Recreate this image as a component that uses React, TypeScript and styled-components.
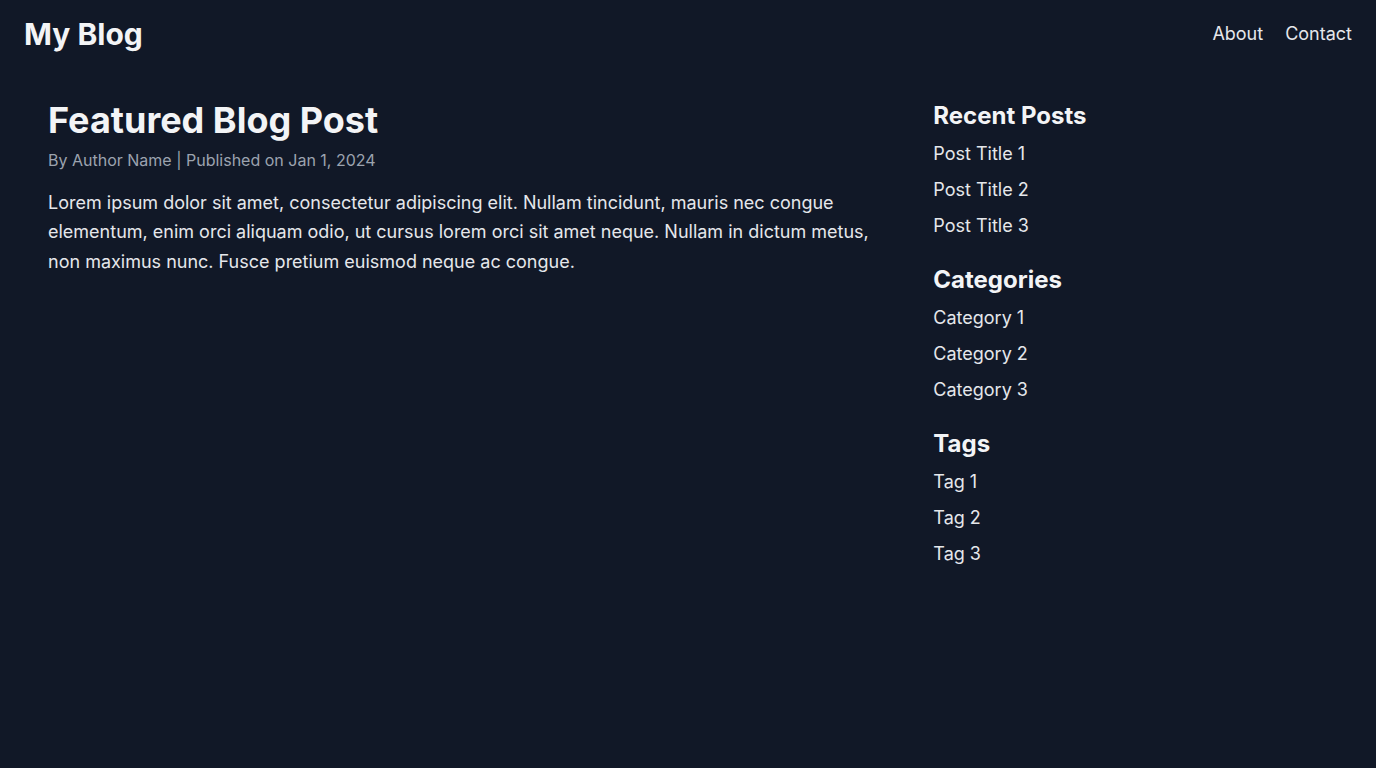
import { createGlobalStyle, styled } from "styled-components";

const GlobalStyle = createGlobalStyle`
  * {
    box-sizing: border-box;
  }
  body {
    margin: 0;
    background: #111827;
    color: #f3f4f6;
    font-family: Inter, "Noto Sans", sans-serif;
  }
  #root {
    min-height: 100vh;
  }
`;

const Page = styled.div`
  min-height: 100vh;
  background: #111827;
`;

const Header = styled.header`
  display: flex;
  align-items: center;
  justify-content: space-between;
  padding: 16px 24px;
`;

const Logo = styled.h1`
  margin: 0;
  font-size: 30px;
  line-height: 36px;
  font-weight: 700;
  color: #f3f4f6;
`;

const Nav = styled.nav`
  display: flex;
  gap: 22px;
`;

const NavLink = styled.a`
  font-size: 18px;
  line-height: 28px;
  color: #e5e7eb;
  text-decoration: none;
`;

const Main = styled.main`
  display: grid;
  grid-template-columns: repeat(3, minmax(0, 1fr));
  gap: 48px;
  padding: 32px 48px;
`;

const Article = styled.article`
  grid-column: span 2;
`;

const Title = styled.h2`
  margin: 0 0 8px;
  font-size: 36px;
  line-height: 40px;
  font-weight: 700;
  color: #f3f4f6;
`;

const Meta = styled.p`
  margin: 0 0 16px;
  font-size: 16px;
  line-height: 24px;
  color: #9ca3af;
`;

const Body = styled.p`
  margin: 0;
  font-size: 18px;
  line-height: 29.25px;
  color: #e5e7eb;
`;

const Sidebar = styled.aside`
  display: flex;
  flex-direction: column;
  gap: 24px;
`;

const SectionTitle = styled.h3`
  margin: 0 0 8px;
  font-size: 24px;
  line-height: 32px;
  font-weight: 700;
  color: #f3f4f6;
`;

const List = styled.ul`
  list-style: none;
  margin: 0;
  padding: 0;
  display: flex;
  flex-direction: column;
  gap: 8px;
`;

const ListLink = styled.a`
  display: block;
  font-size: 18px;
  line-height: 28px;
  color: #e5e7eb;
  text-decoration: none;
`;

const sections = [
  { title: "Recent Posts", items: ["Post Title 1", "Post Title 2", "Post Title 3"] },
  { title: "Categories", items: ["Category 1", "Category 2", "Category 3"] },
  { title: "Tags", items: ["Tag 1", "Tag 2", "Tag 3"] },
];

export default function App() {
  return (
    <Page>
      <GlobalStyle />
      <Header>
        <Logo>My Blog</Logo>
        <Nav>
          <NavLink href="#">About</NavLink>
          <NavLink href="#">Contact</NavLink>
        </Nav>
      </Header>
      <Main>
        <Article>
          <Title>Featured Blog Post</Title>
          <Meta>By Author Name | Published on Jan 1, 2024</Meta>
          <Body>
            Lorem ipsum dolor sit amet, consectetur adipiscing elit. Nullam tincidunt, mauris nec
            congue elementum, enim orci aliquam odio, ut cursus lorem orci sit amet neque. Nullam in
            dictum metus, non maximus nunc. Fusce pretium euismod neque ac congue.
          </Body>
        </Article>
        <Sidebar>
          {sections.map((section) => (
            <section key={section.title}>
              <SectionTitle>{section.title}</SectionTitle>
              <List>
                {section.items.map((item) => (
                  <li key={item}>
                    <ListLink href="#">{item}</ListLink>
                  </li>
                ))}
              </List>
            </section>
          ))}
        </Sidebar>
      </Main>
    </Page>
  );
}
